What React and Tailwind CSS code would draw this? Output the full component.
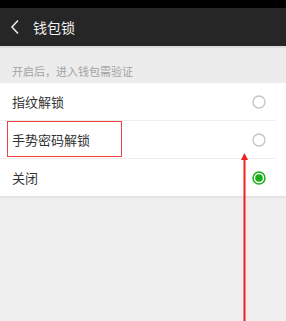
import React from "react";

const options = [
  { label: "指纹解锁", checked: false },
  { label: "手势密码解锁", checked: false, marked: true },
  { label: "关闭", checked: true },
];

function Radio({ checked }) {
  if (checked) {
    return (
      <svg width="14" height="14" viewBox="0 0 14 14">
        <circle cx="7" cy="7" r="6" fill="none" stroke="#1aad19" strokeWidth="1.5" />
        <circle cx="7" cy="7" r="3.8" fill="#1aad19" />
      </svg>
    );
  }
  return (
    <svg width="14" height="14" viewBox="0 0 14 14">
      <circle cx="7" cy="7" r="6" fill="none" stroke="#c4c4c4" strokeWidth="1.3" />
    </svg>
  );
}

function App() {
  return (
    <div
      className="relative w-[286px] h-[321px] overflow-hidden bg-[#efeff0]"
      style={{ fontFamily: '"Noto Sans CJK SC", "Noto Sans", sans-serif' }}
    >
      <div className="h-[8px] bg-black" />
      <div className="h-[38px] bg-[#262626] flex items-center pl-[10px]">
        <svg width="10" height="16" viewBox="0 0 10 16" className="mr-[13px]">
          <path d="M8 1.5 L2 8 L8 14.5" fill="none" stroke="#e8e8e8" strokeWidth="1.6" />
        </svg>
        <span className="text-[14px] text-[#f2f2f2] leading-none">钱包锁</span>
      </div>
      <div className="h-[2px] bg-[#dcdcdc]" />
      <div className="h-[35px] bg-[#ececec] flex items-end pl-[12px] pb-[6px]">
        <span className="text-[11px] text-[#a3a3a3] leading-none">开启后，进入钱包需验证</span>
      </div>
      <div className="bg-white">
        {options.map((opt, i) => (
          <div key={opt.label}>
            {i > 0 && <div className="h-px w-[275px] bg-[#ececec]" />}
            <div className="h-[37px] flex items-center justify-between pl-[12px] pr-[20px]">
              <span className="text-[13px] text-[#333] leading-none">{opt.label}</span>
              <Radio checked={opt.checked} />
            </div>
          </div>
        ))}
      </div>
      <div className="h-[2px] bg-[#e4e4e4]" />

      {/* annotation box */}
      <div className="absolute left-[7px] top-[121px] w-[115px] h-[36px] border-[1.5px] border-[#f04040]" />
      {/* annotation arrow */}
      <svg className="absolute left-[240px] top-[153px]" width="9" height="168" viewBox="0 0 9 168">
        <path d="M4.5 0 L8 7 L1 7 Z" fill="#f02020" />
        <rect x="3.5" y="5" width="2" height="163" fill="#f02020" />
      </svg>
    </div>
  );
}

export default App;
